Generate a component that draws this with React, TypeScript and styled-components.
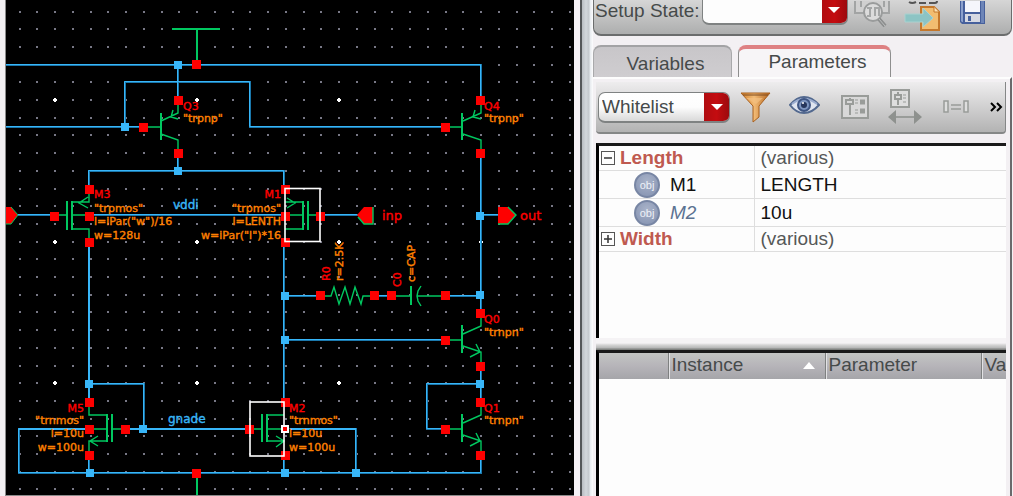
import React from "react";
import styled, { createGlobalStyle } from "styled-components";

const GlobalStyle = createGlobalStyle`
  * { box-sizing: border-box; }
  html, body, #root { height: 100%; }
  body {
    margin: 0;
    overflow: hidden;
    background: #f3f0f3;
    color: #464a4a;
    font-family: "Liberation Sans", Arial, sans-serif;
    font-size: 19px;
    line-height: 24px;
  }
`;

const Workspace = styled.main`
  display: grid;
  grid-template-columns: 574fr 19px 420fr;
  height: 100vh;
`;

const Canvas = styled.section`
  min-width: 0;
  margin-left: 5px;
  overflow: hidden;
  background: #000;
  border-left: 1px solid #8a8a8a;
  border-bottom: 1px solid #8a8a8a;
`;

const Drawing = styled.svg`
  display: block;
  width: 100%;
  height: 100%;
  font-family: "DejaVu Sans", sans-serif;
`;

const Splitter = styled.div`
  background: linear-gradient(
    to right,
    #f5f1f5 0 6px,
    #55575a 6px 8px,
    #b9bdc2 8px,
    #d3d7dc 12px,
    #c4c8cd 15px,
    #e6eaee 16px,
    #fdfdfe 19px
  );
`;

const Side = styled.aside`
  display: flex;
  flex-direction: column;
  min-width: 0;
`;

const SetupBar = styled.div`
  display: flex;
  align-items: flex-end;
  height: 36px;
  margin-right: 1px;
  padding: 0 0 9px 1px;
  overflow: hidden;
  background: linear-gradient(#d6d6d6, #adaeae);
  border: solid #6b6d6d;
  border-width: 0 1px 2px 1px;
  border-radius: 0 0 8px 8px;
`;

const Label = styled.label`
  margin-right: 2px;
  padding-bottom: 2px;
  white-space: nowrap;
`;

const Combo = styled.div<{ $width: number; $shaded?: boolean }>`
  display: grid;
  flex: none;
  width: ${(p) => p.$width}px;
  height: 31px;
  overflow: hidden;
  border: 1px solid #7f8282;
  border-bottom-width: 2px;
  border-radius: 7px;
  background: ${(p) => (p.$shaded ? "linear-gradient(#fff, #fdfdfd 50%, #d9d9d9)" : "#fdfdfd")};
`;

const Select = styled.select`
  grid-area: 1 / 1;
  width: 100%;
  padding: 0 26px 0 3px;
  appearance: none;
  border: 0;
  background: transparent;
  color: inherit;
  font: inherit;
`;

const ComboArrow = styled.span`
  display: grid;
  grid-area: 1 / 1;
  place-items: center;
  justify-self: end;
  width: 25px;
  pointer-events: none;
  background: linear-gradient(to right, #b00c10, #c40c10 50%, #9c0a0e);
`;

const IconRow = styled.div<{ $gap: number }>`
  display: flex;
  align-items: center;
  gap: ${(p) => p.$gap}px;
`;

const IconButton = styled.button<{ $width: number }>`
  display: grid;
  flex: none;
  place-items: center;
  width: ${(p) => p.$width}px;
  padding: 0;
  border: 0;
  background: none;
  color: #000;
`;

const SetupIcons = styled(IconRow)`
  margin: 0 0 -7px 6px;
`;

const Tabs = styled.div`
  display: flex;
  gap: 6px;
  margin-top: 9px;
`;

const Tab = styled.button<{ $active?: boolean }>`
  height: 32px;
  width: ${(p) => (p.$active ? 153 : 139)}px;
  padding: ${(p) => (p.$active ? "0 0 2px 6px" : "4px 0 0 6px")};
  border: solid ${(p) => (p.$active ? "#8e8e8e" : "#a9a9ab")};
  border-width: ${(p) => (p.$active ? "4px 1px 0" : "2px 1px 0")};
  border-top-color: ${(p) => (p.$active ? "#de8183" : "#a3a3a5")};
  border-radius: 8px 8px 0 0;
  background: ${(p) => (p.$active ? "#f7f5f7" : "linear-gradient(#c8c6c9, #cfcdd0)")};
  color: inherit;
  font: inherit;
`;

const Body = styled.div`
  display: flex;
  flex: 1;
  flex-direction: column;
  min-height: 0;
  margin-right: 1px;
  padding: 3px 4px 0 3px;
  border-right: 2px solid #6a6a6c;
  border-top: 2px solid #fdfdfd;
`;

const FilterBar = styled.div`
  display: flex;
  flex: none;
  align-items: center;
  gap: 10px;
  height: 52px;
  padding: 0 0 0 2px;
  overflow: hidden;
  background: linear-gradient(#eeedee, #b3b3b3);
  border: solid #858787;
  border-width: 0 1px 2px 0;
  border-radius: 0 0 4px 4px;
`;

const Sheet = styled.div<{ $grow?: boolean }>`
  flex: ${(p) => (p.$grow ? "1 1 0" : "0 0 195px")};
  min-height: 0;
  margin-top: ${(p) => (p.$grow ? 0 : 9)}px;
  overflow: hidden;
  border: solid #000;
  border-width: 3px 0 0 3px;
  border-top-color: #1a1a1a;
  background: #fdfdfd;
`;

const Sash = styled.div`
  flex: none;
  height: 12px;
  background: linear-gradient(#f5f3f5 0 5px, #d4d4d4 7px, #b4b5b5 10px, #808280 11px);
`;

const Table = styled.table`
  width: 100%;
  table-layout: fixed;
  border-collapse: collapse;
`;

const WideTable = styled(Table)`
  min-width: 482px;
`;

const Name = styled.td`
  padding: 0;
  border: solid #dedede;
  border-width: 0 1px 1px 0;
`;

const Value = styled.td<{ $dark?: boolean }>`
  padding: 0 0 0 6px;
  border-bottom: 1px solid #dedede;
  color: ${(p) => (p.$dark ? "#111" : "#555858")};
`;

const Group = styled.div`
  display: flex;
  align-items: center;
  gap: 5px;
  padding-left: 2px;
  color: #bf5a50;
  font-weight: bold;
`;

const Item = styled.div<{ $linked?: boolean }>`
  display: flex;
  align-items: center;
  gap: 10px;
  height: 27px;
  padding-left: 35px;
  color: ${(p) => (p.$linked ? "#5b7292" : "#111")};
  font-style: ${(p) => (p.$linked ? "italic" : "normal")};
`;

const Expander = styled.button`
  display: grid;
  place-items: center;
  width: 14px;
  height: 14px;
  padding: 0;
  border: 1px solid #555;
  outline: 0;
  background: #fdfdfd;
`;

const Badge = styled.span`
  display: grid;
  place-items: center;
  width: 26px;
  height: 26px;
  border: 2px solid #7886a4;
  border-radius: 50%;
  background: radial-gradient(circle at 50% 35%, #a9b3c9, #8391b0);
  color: #eef1f7;
  font-size: 11px;
  font-style: normal;
  line-height: 12px;
`;

const HeadRow = styled.tr`
  height: 26px;
  background: linear-gradient(#c3c5c3, #b6b4b9 50%, #a5a5a9);
`;

const Head = styled.th`
  padding: 0 10px 2px 3px;
  border-left: 1px solid #7e8080;
  box-shadow: inset 1px 0 #e2e2e4;
  font-weight: normal;
  text-align: left;
  &:first-child { border: 0; box-shadow: none; }
`;

const HeadContent = styled.div`
  display: flex;
  align-items: center;
  justify-content: space-between;
`;

/* ---------- schematic ---------- */

const WIRE = "#38b6f8";
const WIRE_DIM = "#1b78ac";
const PIN = "#fe0000";
const DEVICE = "#00c860";
const NOTE = "#ff8000";

const wires = [
  "M6 65H481V100", "M178 65V100", "M6 127H143", "M125 127V82H250V127H445",
  "M178 153V171", "M89 189V171H284V189", "M18 215H54", "M89 215H285",
  "M320 215H358", "M89 242V402", "M89 384H144V429", "M125 429H250",
  "M89 429H19V473H481V455", "M89 455V473", "M284 242V402", "M285 296H320",
  "M374 296H391", "M445 296H481", "M285 340H445", "M481 153V313",
  "M481 215H499", "M481 366V402", "M481 384H427V429H445", "M284 455V473",
  "M290 429H356V473",
].join("");

const thinDevices = [
  "M147 127H161M178 104V113L161 121M178 119L171 117L173 110M161 134L178 140V149",
  "M449 127H463M481 104V113L463 121M481 119L473 117L475 110M463 134L481 140V149",
  "M449 340H463M481 317V326L463 334M463 346L481 352V362M470 357L480 352L476 344",
  "M449 429H463M481 406V415L463 423M463 435L481 441V451M470 446L480 441L476 433",
  "M58 215H67M89 193V202H72M72 215H86M72 229H89V239M88 197L79 203L88 208",
  "M285 202H303M289 215H303M285 229H303M308 215H316M287 198L295 203L287 208",
  "M89 406V415H107M93 429H107M107 441H89V451M112 429H121M98 436L90 441L98 446",
  "M254 429H262M284 415H267M267 429H281M284 441H267M276 436L284 441L276 447",
  "M324 296H331L334 287L339 304L345 287L350 304L355 287L361 304L363 296H370",
  "M395 296H411M421 286L418 291L417 296L418 301L421 306M417 296H441",
].join("");

const bars = [
  "M161 113V140", "M462 113V140", "M462 325V353", "M462 414V442",
  "M67 201V230", "M72 201V230", "M303 201V230", "M308 201V230",
  "M107 414V442", "M112 414V442", "M262 414V442", "M267 414V442",
  "M411 286V305", "M172 29H220", "M197 29V60", "M197 477V496",
].join("");

const pins: [number, number][] = [
  [196, 64], [178, 100], [143, 127], [178, 153], [480, 100], [445, 127], [480, 153],
  [89, 189], [89, 216], [89, 242], [54, 216], [285, 189], [285, 216], [285, 242],
  [320, 216], [320, 295], [374, 295], [391, 295], [445, 295], [445, 340],
  [480, 313], [480, 366], [445, 429], [480, 402], [480, 455], [89, 402], [89, 429],
  [125, 429], [89, 455], [285, 402], [285, 455], [249, 429], [196, 473],
];

const joints: [number, number][] = [
  [178, 65], [125, 127], [178, 171], [89, 384], [143, 429], [90, 473], [285, 473],
  [356, 473], [285, 296], [285, 340], [480, 295], [480, 216], [480, 384],
];

type Note = { x: number; y: number; t: string; c?: string; s?: number; end?: boolean; up?: boolean };

const notes: Note[] = [
  { x: 183, y: 110, t: "Q3", c: PIN }, { x: 183, y: 122, t: '"trpnp"' },
  { x: 484, y: 110, t: "Q4", c: PIN }, { x: 484, y: 122, t: '"trpnp"' },
  { x: 484, y: 323, t: "Q0", c: PIN }, { x: 484, y: 336, t: '"trnpn"' },
  { x: 484, y: 412, t: "Q1", c: PIN }, { x: 484, y: 424, t: '"trnpn"' },
  { x: 94, y: 198, t: "M3", c: PIN }, { x: 94, y: 212, t: '"trpmos"' },
  { x: 94, y: 225, t: 'l=iPar("w")/16' }, { x: 94, y: 239, t: "w=128u" },
  { x: 281, y: 198, t: "M1", c: PIN, end: true }, { x: 281, y: 212, t: '"trpmos"', end: true },
  { x: 281, y: 225, t: "l=LENTH", end: true }, { x: 281, y: 239, t: 'w=iPar("l")*16', end: true },
  { x: 84, y: 412, t: "M5", c: PIN, end: true }, { x: 84, y: 424, t: '"trnmos"', end: true },
  { x: 84, y: 437, t: "l=10u", end: true }, { x: 84, y: 451, t: "w=100u", end: true },
  { x: 289, y: 412, t: "M2", c: PIN }, { x: 289, y: 424, t: '"trnmos"' },
  { x: 289, y: 437, t: "l=10u" }, { x: 289, y: 451, t: "w=100u" },
  { x: 173, y: 209, t: "vddi", c: WIRE, s: 12 }, { x: 168, y: 423, t: "gnade", c: WIRE, s: 12 },
  { x: 382, y: 220, t: "inp", c: PIN, s: 13 }, { x: 520, y: 220, t: "out", c: PIN, s: 13 },
  { x: 330, y: 281, t: "R0", c: PIN, up: true }, { x: 343, y: 281, t: "r=2.5K", up: true },
  { x: 401, y: 287, t: "C0", c: PIN, up: true }, { x: 415, y: 282, t: "c=CAP", up: true },
];

const gridPoints: { x: number; y: number; major: boolean }[] = [];
for (let i = -2; i < 50; i++) {
  for (let j = -5; j < 40; j++) {
    gridPoints.push({
      x: Math.round(55 + 17.75 * i),
      y: Math.round(100 + 17.7 * j),
      major: i % 8 === 0 && j % 8 === 0,
    });
  }
}

function Schematic() {
  return (
    <Drawing role="img" aria-label="Circuit schematic">
      <g transform="translate(-6 0)" fill="none">
        {gridPoints.map((p) =>
          p.major ? (
            <path key={`${p.x}-${p.y}`} d={`M${p.x - 2} ${p.y}h4M${p.x} ${p.y - 2}v4`} stroke="#fff" strokeWidth="2" />
          ) : (
            <rect key={`${p.x}-${p.y}`} x={p.x - 1} y={p.y - 1} width="2" height="2" fill="#787886" />
          )
        )}
        <path d={wires} stroke={WIRE_DIM} strokeWidth="2" />
        <path d={wires} stroke={WIRE} strokeWidth="1" transform="translate(-.5 -.5)" />
        <path d="M89 242V402M90 429H19M125 429H250M290 429H356" stroke={WIRE} strokeWidth="2" />
        <path d={thinDevices} stroke={DEVICE} strokeWidth="1.4" />
        <path d={bars} stroke={DEVICE} strokeWidth="2" />
        <path d="M6 207H11L18 215L11 224H6Z" fill={PIN} />
        <path d="M11 207L18 215L11 224H6" stroke={DEVICE} />
        <path d="M357 215L364 207H373V224H364Z" fill={PIN} />
        <path d="M373 207V224H364L358 217" stroke={DEVICE} strokeWidth="1.4" />
        <path d="M498 207H508L516 215L508 224H498Z" fill={PIN} />
        <path d="M508 207L516 215L508 224H498" stroke={DEVICE} strokeWidth="1.4" />
        {joints.map(([x, y]) => (
          <rect key={`j${x}-${y}`} x={x - 4} y={y - 4} width="8" height="8" fill={WIRE} />
        ))}
        {pins.map(([x, y]) => (
          <rect key={`p${x}-${y}`} x={x - 4} y={y - 4} width="9" height="9" fill={PIN} />
        ))}
        <rect x="285" y="188.500" width="35" height="53" stroke="#fff" strokeWidth="1.6" />
        <rect x="250" y="402" width="34" height="54" stroke="#fff" strokeWidth="1.6" />
        <rect x="282" y="426" width="6" height="6" fill={PIN} stroke="#fff" strokeWidth="2" />
        {notes.map((n) => (
          <text
            key={`${n.x}-${n.y}`}
            x={n.x}
            y={n.y}
            fill={n.c ?? NOTE}
            stroke={n.c ?? NOTE}
            strokeWidth=".4"
            fontSize={n.s ?? 11}
            textAnchor={n.end ? "end" : "start"}
            transform={n.up ? `rotate(-90 ${n.x} ${n.y})` : undefined}
          >
            {n.t}
          </text>
        ))}
      </g>
    </Drawing>
  );
}

/* ---------- icons ---------- */

const Down = () => (
  <svg width="12" height="7" viewBox="0 0 12 7"><path d="M0 1H12L6 7Z" fill="#fff" /></svg>
);

const BrowseIcon = () => (
  <svg width="38" height="31" viewBox="0 0 38 31" fill="none">
    <path d="M2 0H35V12H2Z" fill="#d0d0d0" />
    <path d="M1 0V12H11M27 12H35V0M7 0V6M30 0V6" stroke="#a2a4a4" strokeWidth="2" />
    <circle cx="19" cy="11" r="9" fill="#dcdcdc" stroke="#9a9c9c" strokeWidth="2" />
    <path d="M16 6V15H13M21 6V15M13 7H18M21 7H25V15" stroke="#a5a7a7" strokeWidth="2" />
    <path d="M25 18L31 25" stroke="#8c8e8e" strokeWidth="4" />
    <path d="M25 18L31 25" stroke="#bcbebe" strokeWidth="1" />
  </svg>
);

const ImportIcon = () => (
  <svg width="38" height="31" viewBox="0 0 38 31" fill="none">
    <path d="M5 1Q8 3 12 1M15 2H22M25 2H31Q33 2 33 0" stroke="#555" strokeWidth="2" />
    <path d="M17 6H30L35 11V29H17Z" fill="#f2bd70" stroke="#c4782c" strokeWidth="2" />
    <path d="M30 6V11H35" fill="#fbe3b5" stroke="#c4782c" />
    <path d="M1 13H19V7L29 17L19 26V21H1Z" fill="#8cc4c4" stroke="#a9d2d0" />
  </svg>
);

const SaveIcon = () => (
  <svg width="27" height="31" viewBox="0 0 27 31">
    <path d="M1 0H26V23H3L1 21Z" fill="#46609c" />
    <path d="M2 0H4V21H3L2 20Z" fill="#8ba0cc" />
    <path d="M6 0H21V11H6Z" fill="#f5f6fb" />
    <path d="M6 13H21V21H6Z" fill="#d6d9e2" />
    <path d="M9 15H12V20H9Z" fill="#46609c" />
    <path d="M22 0H25V22H22Z" fill="#6d85b8" />
  </svg>
);

const FunnelIcon = () => (
  <svg width="31" height="31" viewBox="0 0 31 31">
    <defs>
      <linearGradient id="funnel" x1="0" x2="1">
        <stop offset="0" stopColor="#d6832c" />
        <stop offset=".45" stopColor="#f2bb76" />
        <stop offset="1" stopColor="#b5651e" />
      </linearGradient>
    </defs>
    <path d="M1 1H30L19 14V25L13 30V14Z" fill="url(#funnel)" stroke="#a8601f" />
    <path d="M3 3H28" stroke="#7e4a1e" />
    <path d="M6 6H23L16 12Z" fill="#f3c182" opacity=".7" />
  </svg>
);

const EyeIcon = () => (
  <svg width="31" height="23" viewBox="0 0 31 23">
    <path d="M1 9Q8 1 15 1Q23 1 30 9Q23 17 15 17Q7 17 1 9Z" fill="#dfe5f0" stroke="#53698f" strokeWidth="2" />
    <path d="M3 8Q9 3 15 3Q22 3 28 8" fill="none" stroke="#9badd0" strokeWidth="2" />
    <circle cx="15" cy="9" r="6" fill="#7d95c0" stroke="#3f5684" strokeWidth="2" />
    <circle cx="15" cy="9" r="3" fill="#26365c" />
    <circle cx="14" cy="7" r="1" fill="#fff" />
  </svg>
);

const FormIcon = () => (
  <svg width="28" height="24" viewBox="0 0 28 24" fill="none" stroke="#999c99">
    <rect x="1" y="1" width="26" height="22" fill="#d8d8d8" strokeWidth="2" />
    <path d="M9 3V5M9 10V20" strokeWidth="2" />
    <rect x="5" y="5" width="7" height="4" strokeWidth="2" />
    <path d="M14 5H17M14 8H17M14 15H17M14 18H17" />
    <path d="M19 7H24M19 16H24" strokeWidth="5" />
  </svg>
);

const SpreadIcon = () => (
  <svg width="34" height="36" viewBox="0 0 34 36" fill="none" stroke="#999c99">
    <rect x="3" y="1" width="18" height="17" fill="#dedede" strokeWidth="2" />
    <path d="M10 3V6M10 11V16" strokeWidth="2" />
    <rect x="7" y="6" width="6" height="4" strokeWidth="2" />
    <path d="M15 6H18M15 9H18M15 13H18" />
    <path d="M5 28H29" strokeWidth="2" />
    <path d="M0 28L8 21V35ZM34 28L26 21V35Z" fill="#8e918e" stroke="none" />
  </svg>
);

const EqualIcon = () => (
  <svg width="26" height="14" viewBox="0 0 26 14" fill="none" stroke="#999c99">
    <rect x="1" y="1" width="4" height="11" fill="#dedede" strokeWidth="1.5" />
    <rect x="21" y="1" width="4" height="11" fill="#dedede" strokeWidth="1.5" />
    <path d="M8 5H18M8 9H18" strokeWidth="1.5" />
  </svg>
);

const MoreIcon = () => (
  <svg width="13" height="10" viewBox="0 0 13 10" fill="none" stroke="#000" strokeWidth="2">
    <path d="M1 1L5 5L1 9M7 1L11 5L7 9" />
  </svg>
);

const Sign = ({ open }: { open?: boolean }) => (
  <svg width="10" height="10" viewBox="0 0 10 10" stroke="#333" strokeWidth="1.5">
    <path d={open ? "M1 5H9" : "M1 5H9M5 1V9"} />
  </svg>
);

const SortUp = () => (
  <svg width="12" height="7" viewBox="0 0 12 7"><path d="M0 7H12L6 0Z" fill="#fff" /></svg>
);

export default function App() {
  return (
    <Workspace>
      <GlobalStyle />
      <Canvas><Schematic /></Canvas>
      <Splitter />
      <Side>
        <SetupBar>
          <Label htmlFor="setup-state">Setup State:</Label>
          <Combo $width={146}>
            <Select id="setup-state"><option></option></Select>
            <ComboArrow><Down /></ComboArrow>
          </Combo>
          <SetupIcons $gap={12}>
            <IconButton $width={38} aria-label="Browse states"><BrowseIcon /></IconButton>
            <IconButton $width={38} aria-label="Load state"><ImportIcon /></IconButton>
            <IconButton $width={38} aria-label="Save state"><SaveIcon /></IconButton>
          </SetupIcons>
        </SetupBar>
        <Tabs role="tablist">
          <Tab role="tab" aria-selected={false}>Variables</Tab>
          <Tab role="tab" aria-selected $active>Parameters</Tab>
        </Tabs>
        <Body>
          <FilterBar>
            <Combo $width={132} $shaded>
              <Select aria-label="Parameter filter" defaultValue="Whitelist"><option>Whitelist</option></Select>
              <ComboArrow><Down /></ComboArrow>
            </Combo>
            <IconRow $gap={16}>
              <IconButton $width={31} aria-label="Filter"><FunnelIcon /></IconButton>
              <IconButton $width={35} aria-label="Show"><EyeIcon /></IconButton>
              <IconButton $width={34} aria-label="Edit form"><FormIcon /></IconButton>
              <IconButton $width={34} aria-label="Spread"><SpreadIcon /></IconButton>
              <IconButton $width={36} aria-label="Match"><EqualIcon /></IconButton>
              <IconButton $width={13} aria-label="More"><MoreIcon /></IconButton>
            </IconRow>
          </FilterBar>
          <Sheet>
            <Table>
              <colgroup><col style={{ width: 155 }} /><col /></colgroup>
              <tbody>
                <tr>
                  <Name><Group><Expander aria-label="Collapse Length"><Sign open /></Expander>Length</Group></Name>
                  <Value>(various)</Value>
                </tr>
                <tr>
                  <Name><Item><Badge>obj</Badge>M1</Item></Name>
                  <Value $dark>LENGTH</Value>
                </tr>
                <tr>
                  <Name><Item $linked><Badge>obj</Badge>M2</Item></Name>
                  <Value $dark>10u</Value>
                </tr>
                <tr>
                  <Name><Group><Expander aria-label="Expand Width"><Sign /></Expander>Width</Group></Name>
                  <Value>(various)</Value>
                </tr>
              </tbody>
            </Table>
          </Sheet>
          <Sash />
          <Sheet $grow>
            <WideTable>
              <colgroup>
                <col style={{ width: 69 }} />
                <col style={{ width: 157 }} />
                <col style={{ width: 156 }} />
                <col />
              </colgroup>
              <thead>
                <HeadRow>
                  <Head aria-label="Index" />
                  <Head><HeadContent>Instance<SortUp /></HeadContent></Head>
                  <Head>Parameter</Head>
                  <Head>Value</Head>
                </HeadRow>
              </thead>
            </WideTable>
          </Sheet>
        </Body>
      </Side>
    </Workspace>
  );
}
